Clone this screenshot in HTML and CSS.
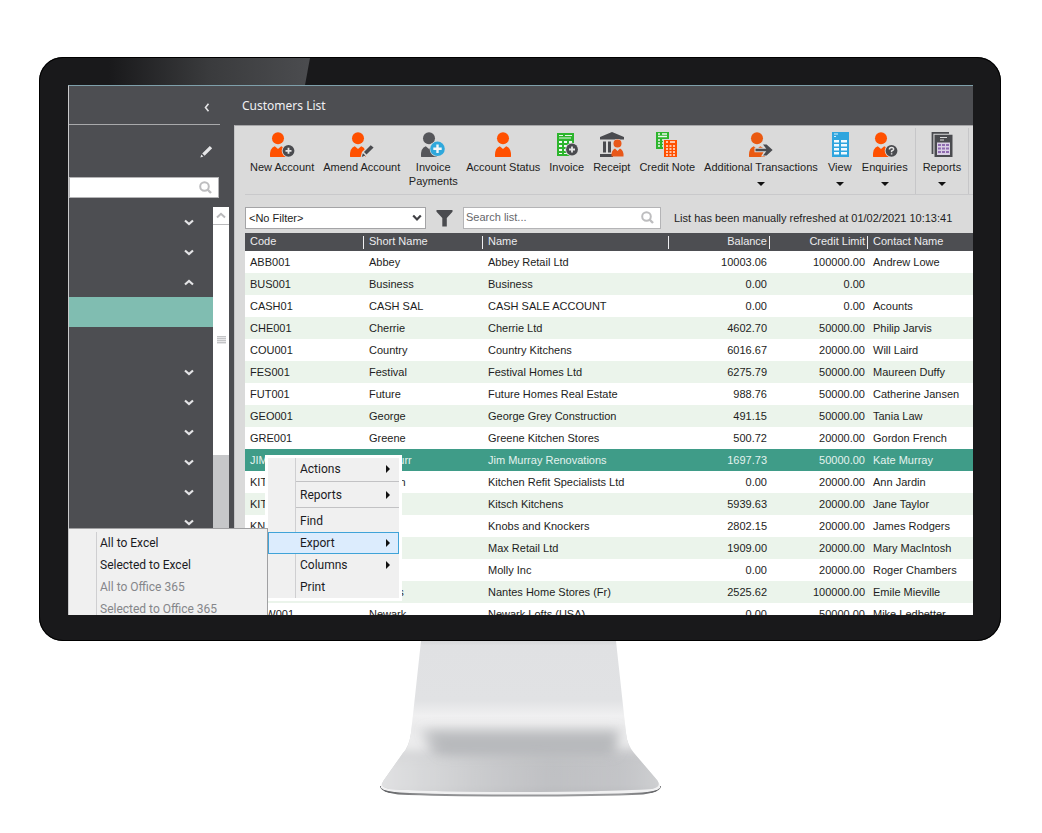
FILE: index.html
```html
<!DOCTYPE html>
<html lang="en">
<head>
<meta charset="utf-8">
<title>Customers List</title>
<link rel="stylesheet" href="styles.css">
</head>
<body>
<svg class="defs" aria-hidden="true">
  <defs>
    <g id="head-body">
      <circle cx="10" cy="6.3" r="6"/>
      <path d="M2 24.400Q1.600 16 6.800 14.300L10 17L13.200 14.300Q18.400 16 18 24.400Q17.800 24.900 17 24.900H3Q2.200 24.900 2 24.400Z"/>
    </g>
    <g id="chev"><path d="M1 1.500L5 5L9 1.500" fill="none" stroke="#e4e4e6" stroke-width="2.200"/></g>
    <g id="lens"><circle cx="5.500" cy="5.500" r="4.300" fill="none" stroke="#bdbdbf" stroke-width="2"/><path d="M8.500 8.500L12 12" stroke="#bdbdbf" stroke-width="2.400"/></g>
    <g id="sheet-lines"><path d="M3 10h3v2H3zM8 10h3v2H8zM13 10h3v2h-3zM3 14h3v2H3zM8 14h3v2H8zM13 14h3v2h-3zM3 18h3v2H3zM8 18h3v2H8zM13 18h3v2h-3zM3 22h3v1H3zM8 22h3v1H8zM13 22h3v1h-3z"/></g>
  </defs>
</svg>

<main class="stage">
  <section class="monitor">
    <div class="glare"></div>
    <div class="screen">
      <aside class="sidebar">
        <div class="side-top"><button class="icon-btn" aria-label="Collapse"><svg width="6" height="9" viewBox="0 0 6 9"><path d="M4.500 .8L1.500 4.500L4.500 8.200" fill="none" stroke="#e4e4e6" stroke-width="1.600"/></svg></button></div>
        <div class="side-edit"><button class="icon-btn" aria-label="Edit"><svg width="13" height="13" viewBox="0 0 13 13"><path d="M2.200 8.500L9.800 .9L12.200 3.200L4.600 10.800ZM.4 12.500L1.300 9.600L3.400 11.600Z" fill="#e6e6e8"/></svg></button></div>
        <div class="side-search"><input type="text" aria-label="Search menu"><svg width="13" height="13"><use href="#lens"/></svg></div>
        <div class="side-body">
          <nav class="side-nav">
            <button class="side-item" aria-label="Section 1"><svg width="10" height="7"><use href="#chev"/></svg></button>
            <button class="side-item" aria-label="Section 2"><svg width="10" height="7"><use href="#chev"/></svg></button>
            <button class="side-item open" aria-label="Section 3"><svg width="10" height="7"><use href="#chev"/></svg></button>
            <button class="side-item active" aria-label="Current page"></button>
            <button class="side-item" aria-label="Page"></button>
            <button class="side-item" aria-label="Section 4"><svg width="10" height="7"><use href="#chev"/></svg></button>
            <button class="side-item" aria-label="Section 5"><svg width="10" height="7"><use href="#chev"/></svg></button>
            <button class="side-item" aria-label="Section 6"><svg width="10" height="7"><use href="#chev"/></svg></button>
            <button class="side-item" aria-label="Section 7"><svg width="10" height="7"><use href="#chev"/></svg></button>
            <button class="side-item" aria-label="Section 8"><svg width="10" height="7"><use href="#chev"/></svg></button>
            <button class="side-item" aria-label="Section 9"><svg width="10" height="7"><use href="#chev"/></svg></button>
          </nav>
          <div class="scrollbar">
            <button class="scroll-up" aria-label="Scroll up"><svg width="10" height="7" viewBox="0 0 10 7"><path d="M1 5.500L5 1.800L9 5.500" fill="none" stroke="#b9b9bb" stroke-width="2"/></svg></button>
            <div class="thumb"><span class="grip"></span></div>
          </div>
        </div>
      </aside>

      <section class="content">
        <h1 class="title">Customers List</h1>
        <div class="panel">
          <div class="toolbar">
            <button class="tool"><svg width="26" height="26" viewBox="0 0 26 26"><use href="#head-body" x="-1" fill="#ff5000"/><circle cx="19.500" cy="18.800" r="6.800" fill="#dadada"/><circle cx="19.500" cy="18.800" r="5.900" fill="#4a4b4f"/><path d="M19.500 15.800v6M16.500 18.800h6" stroke="#e6e6e6" stroke-width="1.800"/></svg><span>New Account</span></button>
            <button class="tool"><svg width="26" height="26" viewBox="0 0 26 26"><use href="#head-body" x="-1" fill="#ff5000"/><path d="M11.500 25.500L13 20L20.500 12.500L25 16L16 25Z" fill="#dadada"/><path d="M15 20L21.700 13.300L24.600 15.600L17.500 22.600ZM12.700 24.900L13.900 21.200L16.400 23.500Z" fill="#4a4b4f"/></svg><span>Amend Account</span></button>
            <button class="tool narrow"><svg width="26" height="26" viewBox="0 0 26 26"><use href="#head-body" x="-1" fill="#55565a"/><circle cx="17.500" cy="16.800" r="7.900" fill="#dadada"/><circle cx="17.500" cy="16.800" r="7.300" fill="#2fa8dc"/><path d="M17.500 12.600v8.400M13.300 16.800h8.400" stroke="#f2f6f8" stroke-width="2.400"/></svg><span>Invoice Payments</span></button>
            <button class="tool"><svg width="26" height="26" viewBox="0 0 26 26"><use href="#head-body" x="3" fill="#ff5000"/></svg><span>Account Status</span></button>
            <button class="tool"><svg width="26" height="26" viewBox="0 0 26 26"><path d="M3 1h17v23H3z" fill="#2db52d"/><path d="M5 3.500h4M11 3.500h7M5 6h12" stroke="#e9f6e9"/><use href="#sheet-lines" x="2" y="-1" fill="#f2faf2"/><circle cx="18" cy="17.500" r="6.800" fill="#dadada"/><circle cx="18" cy="17.500" r="5.900" fill="#4a4b4f"/><path d="M18 14.500v6M15 17.500h6" stroke="#e6e6e6" stroke-width="1.800"/></svg><span>Invoice</span></button>
            <button class="tool"><svg width="26" height="26" viewBox="0 0 26 26"><path d="M13 0L25 5V7.500H1V5ZM4 9.500h3v11H4zM9 9.500h3v11H9zM1 22h13v3H1z" fill="#4a4b4f"/><circle cx="18.500" cy="11.500" r="4.600" fill="#dadada"/><circle cx="18.500" cy="11.500" r="4" fill="#e8581a"/><path d="M12.500 24.500Q12 18.500 16 16.500L18.500 19L21 16.500Q25 18.500 24.500 24.500Z" fill="#e8581a"/></svg><span>Receipt</span></button>
            <button class="tool"><svg width="26" height="26" viewBox="0 0 26 26"><path d="M2 0h13v17H2z" fill="#2db52d"/><path d="M4 2h2M8 2h5M4 4.500h9M4 8h2M8 8h2M4 11h2M8 11h2M4 14h2M8 14h2" stroke="#eef8ee" stroke-width="1.300"/><path d="M9 7h15v19H9z" fill="#dadada"/><path d="M10 8h13v17H10z" fill="#ff5000"/><path d="M12 10h2M16 10h5M12 14h2M15.500 14h2M19 14h2M12 17h2M15.500 17h2M19 17h2M12 20h2M15.500 20h2M19 20h2M12 23h2M15.500 23h2M19 23h2" stroke="#ffe9de" stroke-width="1.500"/></svg><span>Credit Note</span></button>
            <button class="tool"><svg width="26" height="26" viewBox="0 0 26 26"><use href="#head-body" x="-1" fill="#ea5a12"/><path d="M6.500 15.700h9L13 11.500h6L26 18l-7 6.600h-6l2.500-4.300h-9z" fill="#dadada"/><path d="M7.500 16.800h10.800l-3.300-4.300h3.600l6 5.500l-6 5.500H15l3.300-4.300H7.500z" fill="#4a4b4f"/></svg><span>Additional Transactions</span><i class="caret"></i></button>
            <button class="tool"><svg width="26" height="26" viewBox="0 0 26 26"><path d="M5 0h17v25H5z" fill="#2fa5de"/><path d="M7 2h4M7 4.500h2" stroke="#d5effb"/><path d="M7 8h5v2.500H7zM14 8h6v2.500h-6zM7 12h5v2.500H7zM14 12h6v2.500h-6zM7 16h5v2.500H7zM14 16h6v2.500h-6zM7 20h5v2.500H7zM14 20h6v2.500h-6z" fill="#f1fafe"/></svg><span>View</span><i class="caret"></i></button>
            <button class="tool"><svg width="26" height="26" viewBox="0 0 26 26"><use href="#head-body" x="-1" fill="#ff5000"/><circle cx="19.500" cy="18.800" r="6.800" fill="#dadada"/><circle cx="19.500" cy="18.800" r="5.900" fill="#4a4b4f"/><path d="M17.400 17.600Q17.400 15.600 19.600 15.600Q21.800 15.600 21.600 17.400Q21.400 18.500 19.600 19V20.200M19.600 21.200V22.600" fill="none" stroke="#e6e6e6" stroke-width="1.500"/></svg><span>Enquiries</span><i class="caret"></i></button>
            <span class="divider"></span>
            <button class="tool"><svg width="26" height="26" viewBox="0 0 26 26"><path d="M3.500 22V.8H20" fill="none" stroke="#4a4b4f" stroke-width="1.800"/><path d="M5.500 2.800h18v22.200H5.500z" fill="#4a4b4f"/><path d="M11 5.500h7M11 8h4" stroke="#dadada" stroke-width="1.200"/><path d="M8 10.500h13v12.500H8z" fill="#d9cfe4"/><path d="M9 12h3v2H9zM13 12h3v2h-3zM17 12h3v2h-3zM9 15.500h3v2H9zM13 15.500h3v2h-3zM17 15.500h3v2h-3zM9 19h3v2H9zM13 19h3v2h-3zM17 19h3v2h-3z" fill="#8f6bb0"/></svg><span>Reports</span><i class="caret"></i></button>
            <span class="divider"></span>
          </div>

          <div class="filters">
            <div class="select-wrap"><select class="filter" aria-label="Filter"><option>&lt;No Filter&gt;</option></select><svg width="10" height="8" viewBox="0 0 10 8"><path d="M1.200 1.500L5 5.500L8.800 1.500" fill="none" stroke="#3f4044" stroke-width="2.200"/></svg></div>
            <button class="icon-btn" aria-label="Apply filter"><svg width="17" height="17" viewBox="0 0 17 17"><path d="M.5 0h16v1.800L10.800 8v8.500H6.300V8L.5 1.800Z" fill="#4a4b4f"/></svg></button>
            <div class="list-search"><input type="text" placeholder="Search list..." aria-label="Search list"><svg width="13" height="13"><use href="#lens"/></svg></div>
            <p class="status">List has been manually refreshed at 01/02/2021 10:13:41</p>
          </div>

          <table class="grid">
            <colgroup><col class="c-code"><col class="c-short"><col class="c-name"><col class="c-bal"><col class="c-limit"><col></colgroup>
            <thead><tr><th>Code</th><th>Short Name</th><th>Name</th><th class="num">Balance</th><th class="num">Credit Limit</th><th>Contact Name</th></tr></thead>
            <tbody>
              <tr><td>ABB001</td><td>Abbey</td><td>Abbey Retail Ltd</td><td class="num">10003.06</td><td class="num">100000.00</td><td>Andrew Lowe</td></tr>
              <tr><td>BUS001</td><td>Business</td><td>Business</td><td class="num">0.00</td><td class="num">0.00</td><td></td></tr>
              <tr><td>CASH01</td><td>CASH SAL</td><td>CASH SALE ACCOUNT</td><td class="num">0.00</td><td class="num">0.00</td><td>Acounts</td></tr>
              <tr><td>CHE001</td><td>Cherrie</td><td>Cherrie Ltd</td><td class="num">4602.70</td><td class="num">50000.00</td><td>Philip Jarvis</td></tr>
              <tr><td>COU001</td><td>Country</td><td>Country Kitchens</td><td class="num">6016.67</td><td class="num">20000.00</td><td>Will Laird</td></tr>
              <tr><td>FES001</td><td>Festival</td><td>Festival Homes Ltd</td><td class="num">6275.79</td><td class="num">50000.00</td><td>Maureen Duffy</td></tr>
              <tr><td>FUT001</td><td>Future</td><td>Future Homes Real Estate</td><td class="num">988.76</td><td class="num">50000.00</td><td>Catherine Jansen</td></tr>
              <tr><td>GEO001</td><td>George</td><td>George Grey Construction</td><td class="num">491.15</td><td class="num">50000.00</td><td>Tania Law</td></tr>
              <tr><td>GRE001</td><td>Greene</td><td>Greene Kitchen Stores</td><td class="num">500.72</td><td class="num">20000.00</td><td>Gordon French</td></tr>
              <tr class="selected"><td>JIM001</td><td>Jim Murr</td><td>Jim Murray Renovations</td><td class="num">1697.73</td><td class="num">50000.00</td><td>Kate Murray</td></tr>
              <tr><td>KIT001</td><td>Kitchen</td><td>Kitchen Refit Specialists Ltd</td><td class="num">0.00</td><td class="num">20000.00</td><td>Ann Jardin</td></tr>
              <tr><td>KIT002</td><td>Kitsch</td><td>Kitsch Kitchens</td><td class="num">5939.63</td><td class="num">20000.00</td><td>Jane Taylor</td></tr>
              <tr><td>KN</td><td>Knobs</td><td>Knobs and Knockers</td><td class="num">2802.15</td><td class="num">20000.00</td><td>James Rodgers</td></tr>
              <tr><td></td><td>Max</td><td>Max Retail Ltd</td><td class="num">1909.00</td><td class="num">20000.00</td><td>Mary MacIntosh</td></tr>
              <tr><td></td><td>Molly</td><td>Molly Inc</td><td class="num">0.00</td><td class="num">20000.00</td><td>Roger Chambers</td></tr>
              <tr><td></td><td>Nantes</td><td>Nantes Home Stores (Fr)</td><td class="num">2525.62</td><td class="num">100000.00</td><td>Emile Mieville</td></tr>
              <tr><td>NEW001</td><td>Newark</td><td>Newark Lofts (USA)</td><td class="num">0.00</td><td class="num">50000.00</td><td>Mike Ledbetter</td></tr>
            </tbody>
          </table>
        </div>
      </section>

      <div class="menu context" role="menu">
        <button class="item" role="menuitem">Actions<i class="arrow"></i></button>
        <hr>
        <button class="item" role="menuitem">Reports<i class="arrow"></i></button>
        <hr>
        <button class="item" role="menuitem">Find</button>
        <button class="item hover" role="menuitem">Export<i class="arrow"></i></button>
        <button class="item" role="menuitem">Columns<i class="arrow"></i></button>
        <button class="item" role="menuitem">Print</button>
      </div>
      <div class="menu submenu" role="menu">
        <button class="item" role="menuitem">All to Excel</button>
        <button class="item" role="menuitem">Selected to Excel</button>
        <button class="item" role="menuitem" disabled>All to Office 365</button>
        <button class="item" role="menuitem" disabled>Selected to Office 365</button>
      </div>
    </div>
  </section>

  <svg class="stand" viewBox="0 0 281 156" aria-hidden="true">
    <defs>
      <linearGradient id="neck" x1="0" y1="0" x2="0" y2="1">
        <stop offset="0" stop-color="#d6d7d9"/><stop offset=".03" stop-color="#e0e1e3"/><stop offset=".38" stop-color="#e1e2e4"/><stop offset=".48" stop-color="#f0f0f1"/><stop offset=".53" stop-color="#ececed"/><stop offset=".63" stop-color="#d2d3d5"/><stop offset=".7" stop-color="#c3c4c7"/><stop offset=".92" stop-color="#c4c5c8"/><stop offset="1" stop-color="#b8b9bc"/>
      </linearGradient>
      <linearGradient id="sheen" x1="0" y1="0" x2="1" y2="0">
        <stop offset="0" stop-color="#eaeaeb" stop-opacity=".9"/><stop offset=".25" stop-color="#dedfe0" stop-opacity=".6"/><stop offset=".6" stop-color="#b9babd" stop-opacity=".4"/><stop offset=".8" stop-color="#c0c1c4" stop-opacity=".3"/><stop offset="1" stop-color="#e2e3e4" stop-opacity=".7"/>
      </linearGradient>
      <linearGradient id="lip" x1="0" y1="0" x2="1" y2="0">
        <stop offset="0" stop-color="#5c5d60"/><stop offset=".14" stop-color="#8d8e90"/><stop offset=".5" stop-color="#96979a"/><stop offset=".86" stop-color="#98999b"/><stop offset="1" stop-color="#5c5d60"/>
      </linearGradient>
      <filter id="soft" x="-20%" y="-100%" width="140%" height="300%"><feGaussianBlur stdDeviation="6"/></filter>
      <clipPath id="body"><path d="M41 0H236L246 92Q247 104 254 112L277 139Q282 146 272 148Q220 151 140 151Q60 151 9 148Q-1 146 4 139L23 112Q29 106 31 92Z"/></clipPath>
    </defs>
    <path d="M0 145Q0 151 18 153.500Q60 155.500 140 155.500Q221 155.500 263 153.500Q281 151 281 145Z" fill="url(#lip)"/>
    <path d="M4 139H277Q281 144 280 147Q277 150 262 151.500Q220 153.500 140 153.500Q60 153.500 20 151.500Q4 150 1 147Q0 144 4 139Z" fill="#f1f1f2"/>
    <g clip-path="url(#body)">
      <path d="M0 0H281V156H0Z" fill="url(#neck)"/>
      <path d="M-20 114H300V170H-20Z" fill="url(#sheen)" filter="url(#soft)"/>
      <path d="M14 82H36L52 112H14ZM262 82H244L232 108H262Z" fill="#ececed" filter="url(#soft)"/>
      <path d="M44 90H238L234 112H62Z" fill="#aeb0b4" fill-opacity=".7" filter="url(#soft)"/>
    </g>
  </svg>
</main>
</body>
</html>
```
FILE: styles.css
```css
* { box-sizing: border-box; }
body {
  margin: 0;
  background: #fff;
  color: #1d1d22;
  font: 11px/14px "Liberation Sans", Arial, sans-serif;
}
button, input, select { font: inherit; color: inherit; margin: 0; }
button { border: 0; background: none; padding: 0; }
svg { display: block; }
.defs { position: absolute; width: 0; height: 0; }

.stage {
  display: flex;
  flex-direction: column;
  align-items: center;
  padding: 57px 41px 36px 39px;
}
.monitor {
  position: relative;
  width: 100%;
  padding: 28px 28px 26px 29px;
  background: #19191b;
  border-radius: 24px;
  box-shadow: inset 0 0 0 1px #000;
  overflow: hidden;
}
.glare {
  position: absolute;
  top: 1px;
  left: 70px;
  width: 201px;
  height: 27px;
  background: linear-gradient(90deg, #19191b, #3a3b3d 50%, #4b4c4f);
  clip-path: polygon(0 0, 100% 0, 196px 100%, 0 100%);
}
.screen {
  position: relative;
  display: flex;
  aspect-ratio: 905 / 530;
  overflow: hidden;
  background: #4d4e52;
  border-top: 1px solid #7fa0ab;
  border-left: 1px solid #c9c9cb;
}
.stand { width: 281px; height: 156px; }

/* Sidebar */
.sidebar {
  display: flex;
  flex-direction: column;
  flex: 0 0 165px;
}
.icon-btn { display: block; }
.side-top, .side-edit {
  display: flex;
  justify-content: flex-end;
  align-items: center;
}
.side-top {
  height: 39px;
  margin-right: 14px;
  padding: 4px 10px 0 0;
  border-bottom: 1px solid #a9a9ab;
}
.side-edit { height: 52px; padding: 0 21px 0 0; }
.side-search, .list-search {
  position: relative;
  background: #fff;
  border: 1px solid #b4b4b6;
}
.side-search { height: 21px; margin-right: 15px; }
.side-search input, .list-search input {
  display: block;
  width: 100%;
  height: 100%;
  border: 0;
  padding: 0 24px 2px 2px;
  background: none;
  outline: 0;
}
.side-search svg, .list-search svg {
  position: absolute;
  top: 3px;
  right: 6px;
}
.side-body {
  display: flex;
  flex: 1;
  min-height: 0;
  margin-top: 9px;
  padding-right: 5px;
}
.side-nav { flex: 1; }
.side-item {
  display: flex;
  align-items: center;
  justify-content: flex-end;
  width: 100%;
  height: 30px;
  padding-right: 19px;
}
.side-item.open svg { transform: rotate(180deg); }
.side-item.active { background: #80bdb1; }
.scrollbar { width: 16px; background: #c6c7c9; }
.scroll-up {
  display: flex;
  align-items: center;
  justify-content: center;
  width: 100%;
  height: 18px;
  background: #fff;
  border-bottom: 1px solid #b9b9bb;
}
.thumb {
  display: flex;
  align-items: center;
  justify-content: center;
  height: 230px;
  background: #fff;
}
.grip {
  width: 9px;
  height: 8px;
  background: repeating-linear-gradient(#c3c4c6 0 1px, #e6e6e8 1px 2px);
}

/* Content */
.content { display: flex; flex-direction: column; flex: 1; min-width: 0; }
.title {
  margin: 0;
  height: 39px;
  padding-left: 8px;
  font: 12px/39px "Noto Sans", sans-serif;
  color: #f0f0f2;
}
.panel {
  flex: 1;
  min-height: 0;
  background: #dadada;
  border-top: 1px solid #a6a6a8;
  border-left: 1px solid #c4c4c6;
}
.toolbar {
  display: flex;
  gap: 9px;
  height: 69px;
  margin-left: 10px;
  padding: 6px 0 0 5px;
  border-bottom: 1px solid #c9c9cb;
}
.tool {
  display: flex;
  flex: none;
  flex-direction: column;
  align-items: center;
  white-space: nowrap;
}
.tool span { margin-top: 2px; }
.tool.narrow { width: 48px; white-space: normal; }
.caret {
  margin-top: 8px;
  border: 4px solid transparent;
  border-top-color: #111;
  border-bottom: 0;
}
.divider { width: 1px; height: 66px; margin: -4px -2px 0; background: #c6c6c8; }

.filters {
  display: flex;
  align-items: center;
  margin-left: 10px;
  padding: 12px 0 4px;
}
.select-wrap { position: relative; width: 181px; }
.filter {
  display: block;
  width: 100%;
  height: 22px;
  padding: 0 3px;
  appearance: none;
  background: #fff;
  border: 1px solid #a4a4a6;
  border-radius: 0;
}
.select-wrap svg { position: absolute; top: 7px; right: 4px; pointer-events: none; }
.filters .icon-btn { margin: 0 10px; }
.list-search { width: 198px; height: 22px; }
.list-search input::placeholder { color: #66676b; opacity: 1; }
.status { margin: 0 0 0 13px; white-space: nowrap; }

.grid {
  width: calc(100% - 10px);
  margin-left: 10px;
  border-collapse: collapse;
  table-layout: fixed;
  background: #fff;
}
.c-code { width: 119px; }
.c-short { width: 119px; }
.c-name { width: 186px; }
.c-bal { width: 101px; }
.c-limit { width: 98px; }
.grid th, .grid td {
  padding: 0 4px 0 5px;
  text-align: left;
  white-space: nowrap;
  overflow: hidden;
}
.grid th {
  height: 18px;
  padding-bottom: 2px;
  background: linear-gradient(#f0f0f2, #f0f0f2) right 0 top 3px / 1px 13px no-repeat #4d4e52;
  color: #ececee;
  font-weight: normal;
}
.grid th:last-child { background: #4d4e52; }
.grid td { height: 22px; }
.grid .num { padding-right: 3px; text-align: right; }
.grid tbody tr:nth-child(even) { background: #ebf4eb; }
.grid tbody .selected:nth-child(even) { background: #3f9c88; color: #e4f3ef; }

/* Menus */
.menu {
  position: absolute;
  background: #f0f0f0;
  color: #1b1b1f;
  font: 12px/22px Roboto, "Noto Sans", sans-serif;
}
.menu .item {
  display: flex;
  align-items: center;
  justify-content: space-between;
  width: 100%;
  height: 22px;
  border: 1px solid transparent;
}
.menu .item:disabled { color: #85868a; }
.menu hr {
  height: 4px;
  margin: 0 0 0 28px;
  border: 0;
  background: linear-gradient(#c2c2c4, #c2c2c4) 0 1px / 100% 1px no-repeat;
}
.context {
  top: 369px;
  left: 196px;
  width: 137px;
  border: 3px solid #fff;
  background: linear-gradient(90deg, #f0f0f0 27px, #cfcfd1 27px 28px, #f0f0f0 28px);
}
.context .item { padding: 0 8px 0 31px; }
.menu .hover { background: #dcecfd; border-color: #3fa3d8; }
.arrow {
  border: 4px solid transparent;
  border-left-color: #111;
  border-right: 0;
}
.submenu {
  top: 442px;
  left: 0;
  width: 199px;
  padding-top: 3px;
  border: solid #a0a0a2;
  border-width: 1px 1px 0 0;
  background: linear-gradient(90deg, transparent 27px, #cfcfd1 27px 28px, transparent 28px) 0 3px no-repeat #f0f0f0;
}
.submenu .item { padding-left: 30px; }
```
